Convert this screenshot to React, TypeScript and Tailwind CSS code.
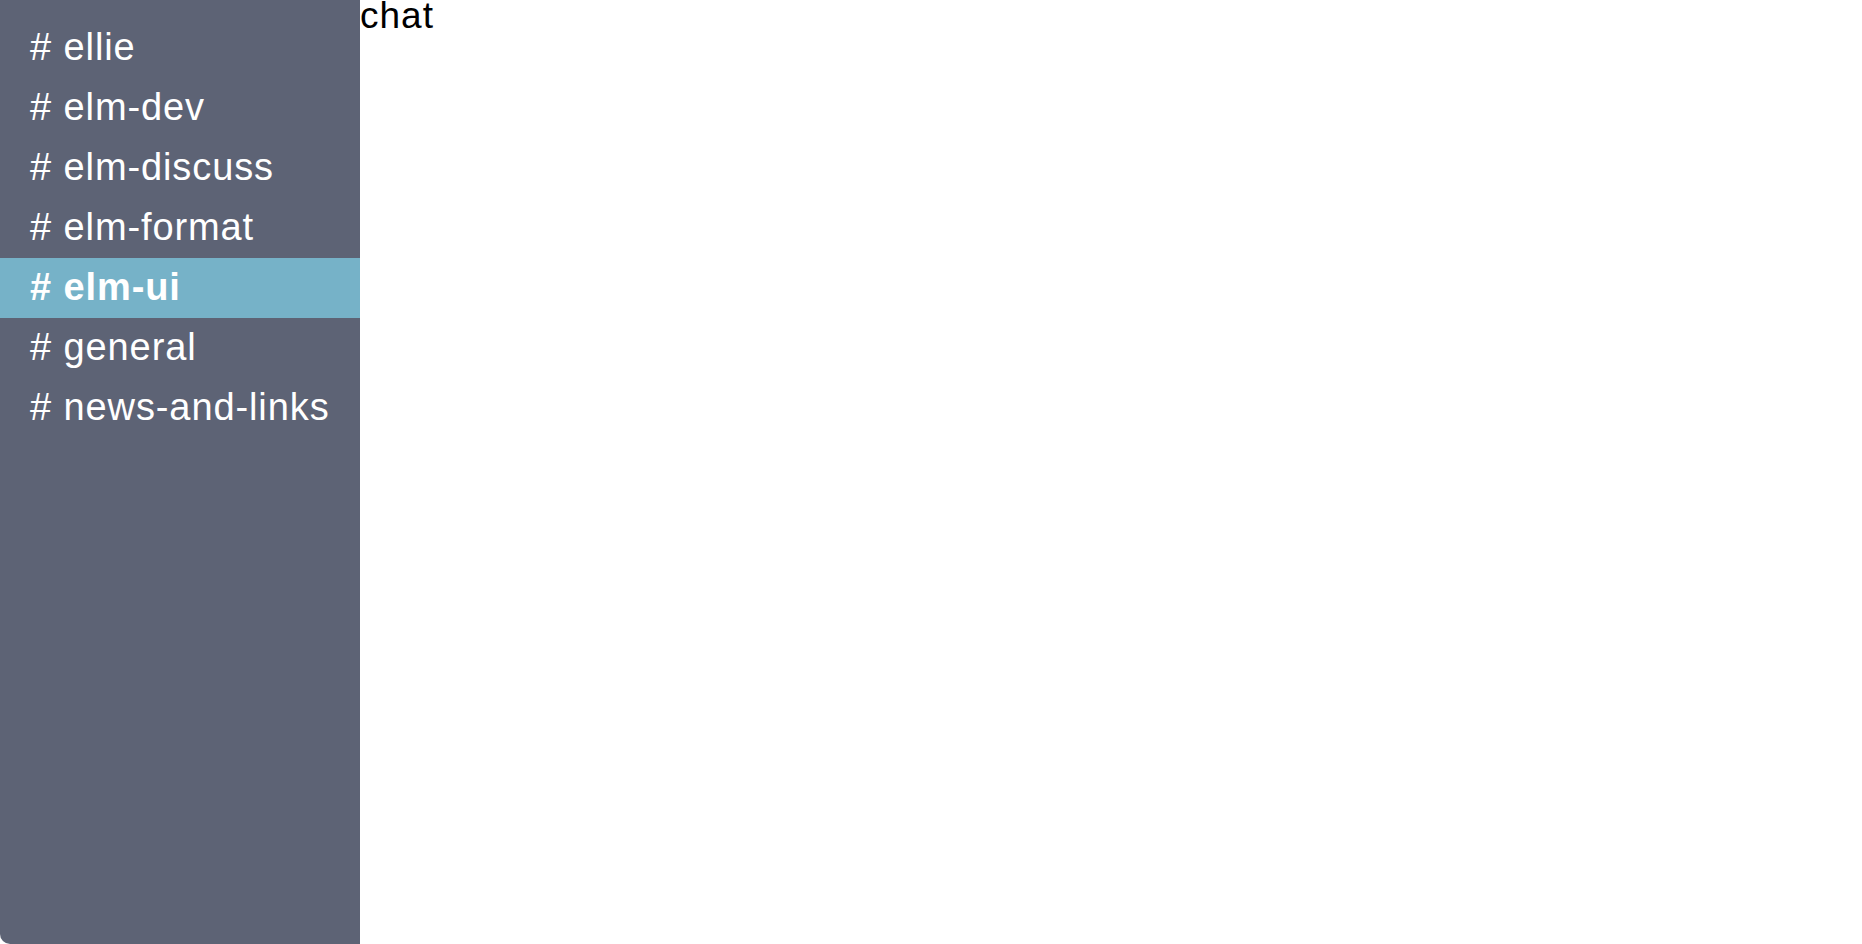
const channels = [
  "ellie",
  "elm-dev",
  "elm-discuss",
  "elm-format",
  "elm-ui",
  "general",
  "news-and-links",
];

const active = "elm-ui";

export default function App() {
  return (
    <div className="flex h-[944px] w-full bg-white font-['Liberation_Sans',Arial,sans-serif]">
      {/* channel list */}
      <nav className="w-[360px] shrink-0 bg-[#5d6375] pt-[18px] rounded-bl-[10px]">
        {channels.map((name) => (
          <div
            key={name}
            className={
              name === active
                ? "h-[60px] flex items-center pl-[30px] pb-[2px] bg-[#76b2c8] text-white text-[38px] tracking-[0.9px] font-bold"
                : "h-[60px] flex items-center pl-[30px] pb-[2px] text-white text-[38px] tracking-[0.9px]"
            }
          >
            # {name}
          </div>
        ))}
      </nav>

      <main className="flex-1">
        <div className="text-[37px] leading-[32px] tracking-[1px] text-black">chat</div>
      </main>
    </div>
  );
}
